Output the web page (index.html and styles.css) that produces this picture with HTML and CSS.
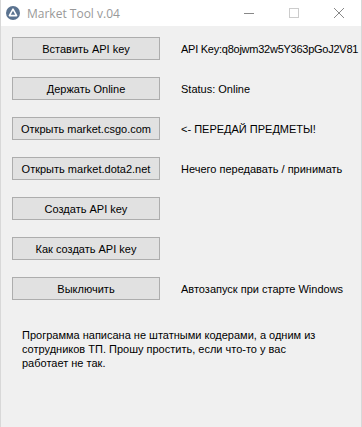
FILE: index.html
```
<!DOCTYPE html>
<html lang="ru">
<head>
    <meta charset="UTF-8">
    <title>Market Tool v.04</title>
    <link rel="stylesheet" href="styles.css">
</head>
<body>
    <div class="window">
        <div class="titlebar">
            <div class="title">
                <svg class="app-icon" width="14" height="14" viewBox="0 0 14 14">
                    <circle cx="7" cy="7" r="7" fill="#5b7390"/>
                    <path d="M7 3.2 L10.6 9.6 L3.4 9.6 Z" fill="none" stroke="#fff" stroke-width="1.6" stroke-linejoin="round"/>
                </svg>
                <span>Market Tool v.04</span>
            </div>
            <div class="controls">
                <span class="ctl">
                    <svg width="10" height="10" viewBox="0 0 10 10"><path d="M0 5.5 H10" stroke="#888" stroke-width="1"/></svg>
                </span>
                <span class="ctl">
                    <svg width="10" height="10" viewBox="0 0 10 10"><rect x="0.5" y="0.5" width="9" height="9" fill="none" stroke="#ccc" stroke-width="1"/></svg>
                </span>
                <span class="ctl">
                    <svg width="10" height="10" viewBox="0 0 10 10"><path d="M0 0 L10 10 M10 0 L0 10" stroke="#888" stroke-width="1"/></svg>
                </span>
            </div>
        </div>

        <div class="content">
            <div class="rows">
                <div class="row">
                    <button class="btn">Вставить API key</button>
                    <span class="label key">API Key:q8ojwm32w5Y363pGoJ2V81</span>
                </div>
                <div class="row">
                    <button class="btn">Держать Online</button>
                    <span class="label">Status: Online</span>
                </div>
                <div class="row">
                    <button class="btn">Открыть market.csgo.com</button>
                    <span class="label">&lt;- ПЕРЕДАЙ ПРЕДМЕТЫ!</span>
                </div>
                <div class="row">
                    <button class="btn">Открыть market.dota2.net</button>
                    <span class="label">Нечего передавать / принимать</span>
                </div>
                <div class="row">
                    <button class="btn">Создать API key</button>
                </div>
                <div class="row">
                    <button class="btn">Как создать API key</button>
                </div>
                <div class="row">
                    <button class="btn">Выключить</button>
                    <span class="label">Автозапуск при старте Windows</span>
                </div>
            </div>

            <p class="note">
                Программа написана не штатными кодерами, а одним из<br>
                сотрудников ТП. Прошу простить, если что-то у вас<br>
                работает не так.
            </p>
        </div>
    </div>
</body>
</html>
```

FILE: styles.css
```
html, body { margin: 0; padding: 0; }
body { width: 362px; height: 427px; overflow: hidden; background: #f0f0f0; font-family: 'Liberation Sans', Arial, sans-serif; font-size: 11px; color: #000; }
.window { height: 427px; border-left: 1px solid #d8d8d8; border-right: 1px solid #d8d8d8; box-sizing: border-box; }
.titlebar { height: 26px; background: #fff; display: flex; align-items: center; justify-content: space-between; }
.title { display: flex; align-items: center; gap: 7px; padding-left: 5px; color: #999; font-family: 'Open Sans', 'Liberation Sans', sans-serif; font-size: 12px; }
.app-icon { display: block; }
.controls { display: flex; height: 100%; }
.ctl { width: 45px; display: flex; align-items: center; justify-content: center; }
.content { padding: 11px 0 0 11px; }
.rows { display: flex; flex-direction: column; gap: 17px; }
.row { display: flex; align-items: center; height: 23px; }
.btn { flex-shrink: 0; width: 148px; height: 23px; margin: 0; padding: 0; background: #e1e1e1; border: 1px solid #adadad; font-family: inherit; font-size: 11px; color: #000; }
.label { margin-left: 21px; white-space: nowrap; }
.label.key { letter-spacing: -0.25px; }
.note { margin: 28px 0 0 10px; line-height: 14px; }
```
